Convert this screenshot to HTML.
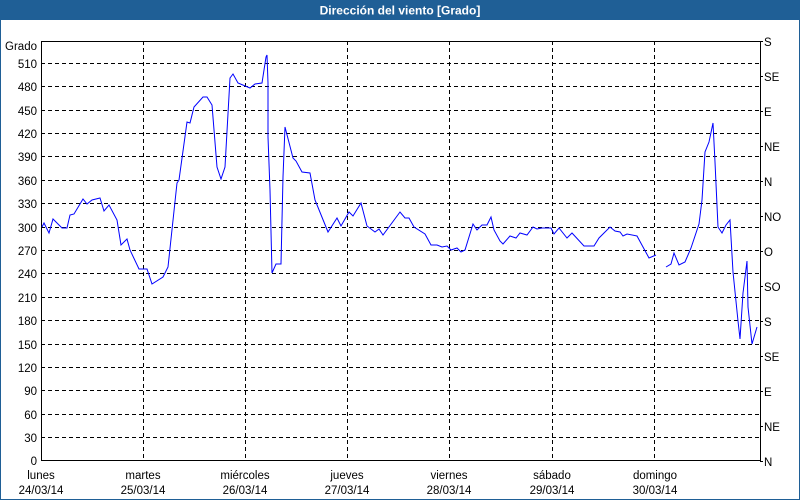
<!DOCTYPE html>
<html><head><meta charset="utf-8"><style>
html,body{margin:0;padding:0;background:#fff}
svg{display:block}
text{font-family:"Liberation Sans",sans-serif;font-size:11.5px;fill:#000}
</style></head><body>
<svg width="800" height="500" viewBox="0 0 800 500" xmlns="http://www.w3.org/2000/svg">
<rect x="0" y="0" width="800" height="500" fill="#fff"/>
<rect x="0.5" y="0.5" width="799" height="499" fill="none" stroke="#1f5f96"/>
<rect x="0" y="0" width="800" height="20" fill="#1f5f96"/>
<text x="400" y="14.5" text-anchor="middle" style="font-weight:bold;fill:#fff;font-size:12px">Dirección del viento [Grado]</text>
<g stroke="#000" stroke-width="1" stroke-dasharray="4 3" fill="none">
<path d="M41 63.5H760M41 86.5H760M41 110.5H760M41 133.5H760M41 156.5H760M41 180.5H760M41 203.5H760M41 227.5H760M41 250.5H760M41 273.5H760M41 297.5H760M41 320.5H760M41 344.5H760M41 367.5H760M41 390.5H760M41 414.5H760M41 437.5H760"/>
<path d="M143.5 41V460M245.5 41V460M347.5 41V460M449.5 41V460M552.5 41V460M654.5 41V460"/>
</g>
<rect x="41.5" y="41.5" width="719" height="419" fill="none" stroke="#000"/>
<g stroke="#000"><path d="M760 41.5h3M760 76.5h3M760 111.5h3M760 146.5h3M760 181.5h3M760 216.5h3M760 251.5h3M760 286.5h3M760 321.5h3M760 356.5h3M760 391.5h3M760 426.5h3M760 461.5h3"/></g>
<g text-anchor="end">
<text x="37" y="50">Grado</text>
<text x="37" y="68">510</text><text x="37" y="91">480</text><text x="37" y="115">450</text><text x="37" y="138">420</text><text x="37" y="161">390</text><text x="37" y="185">360</text><text x="37" y="208">330</text><text x="37" y="232">300</text><text x="37" y="255">270</text><text x="37" y="278">240</text><text x="37" y="302">210</text><text x="37" y="325">180</text><text x="37" y="349">150</text><text x="37" y="372">120</text><text x="37" y="395">90</text><text x="37" y="419">60</text><text x="37" y="442">30</text><text x="37" y="465">0</text>
</g>
<g>
<text x="764" y="46">S</text><text x="764" y="81">SE</text><text x="764" y="116">E</text><text x="764" y="151">NE</text><text x="764" y="186">N</text><text x="764" y="221">NO</text><text x="764" y="256">O</text><text x="764" y="291">SO</text><text x="764" y="326">S</text><text x="764" y="361">SE</text><text x="764" y="396">E</text><text x="764" y="431">NE</text><text x="764" y="466">N</text>
</g>
<g text-anchor="middle">
<text x="41" y="479">lunes</text><text x="41" y="494">24/03/14</text>
<text x="143" y="479">martes</text><text x="143" y="494">25/03/14</text>
<text x="245" y="479">miércoles</text><text x="245" y="494">26/03/14</text>
<text x="347" y="479">jueves</text><text x="347" y="494">27/03/14</text>
<text x="449" y="479">viernes</text><text x="449" y="494">28/03/14</text>
<text x="552" y="479">sábado</text><text x="552" y="494">29/03/14</text>
<text x="655" y="479">domingo</text><text x="655" y="494">30/03/14</text>
</g>
<g fill="none" stroke="#0000ff" stroke-width="1">
<polyline points="42,227 44,223 49,233 53,219 62,228 67,228 70,215 74,214 83,199 87,204 92,200 100,198 104,211 109,205 117,220 121,245 127,239 130,250 139,269 147,269 152,284 163,277 168,267 177,183 179,180 187,122 190,123 194,107 203,97 207,97 212,105 217,167 221,179 225,167 230,78 233,74 238,83 250,88 255,84 262,83 266,57 267,55 268,83 268,137 270,190 272,273 276,264 281,264 283,177 285,127 293,158 296,161 302,172 310,173 315,200 328,232 337,218 341,226 349,212 353,216 361,203 367,226 375,232 379,229 383,235 400,212 405,218 409,218 414,227 425,234 431,245 437,245 442,247 447,246 451,250 457,248 461,252 465,250 473,224 477,230 482,225 487,225 491,217 494,230 500,241 503,244 510,236 516,238 520,233 527,235 533,227 537,229 542,228 551,228 554,234 559,228 567,238 572,233 584,246 594,246 599,238 610,227 615,231 620,232 623,236 627,234 637,236 649,258 656,255"/>
<polyline points="666,267 671,264 674,253 679,265 685,262 691,248 699,224 702,200 705,152 709,142 713,123 715,162 718,227 722,233 726,225 730,220 733,272 738,321 740,339 743,293 747,261 748,307 752,344 757,327"/>
</g>
</svg>
</body></html>
